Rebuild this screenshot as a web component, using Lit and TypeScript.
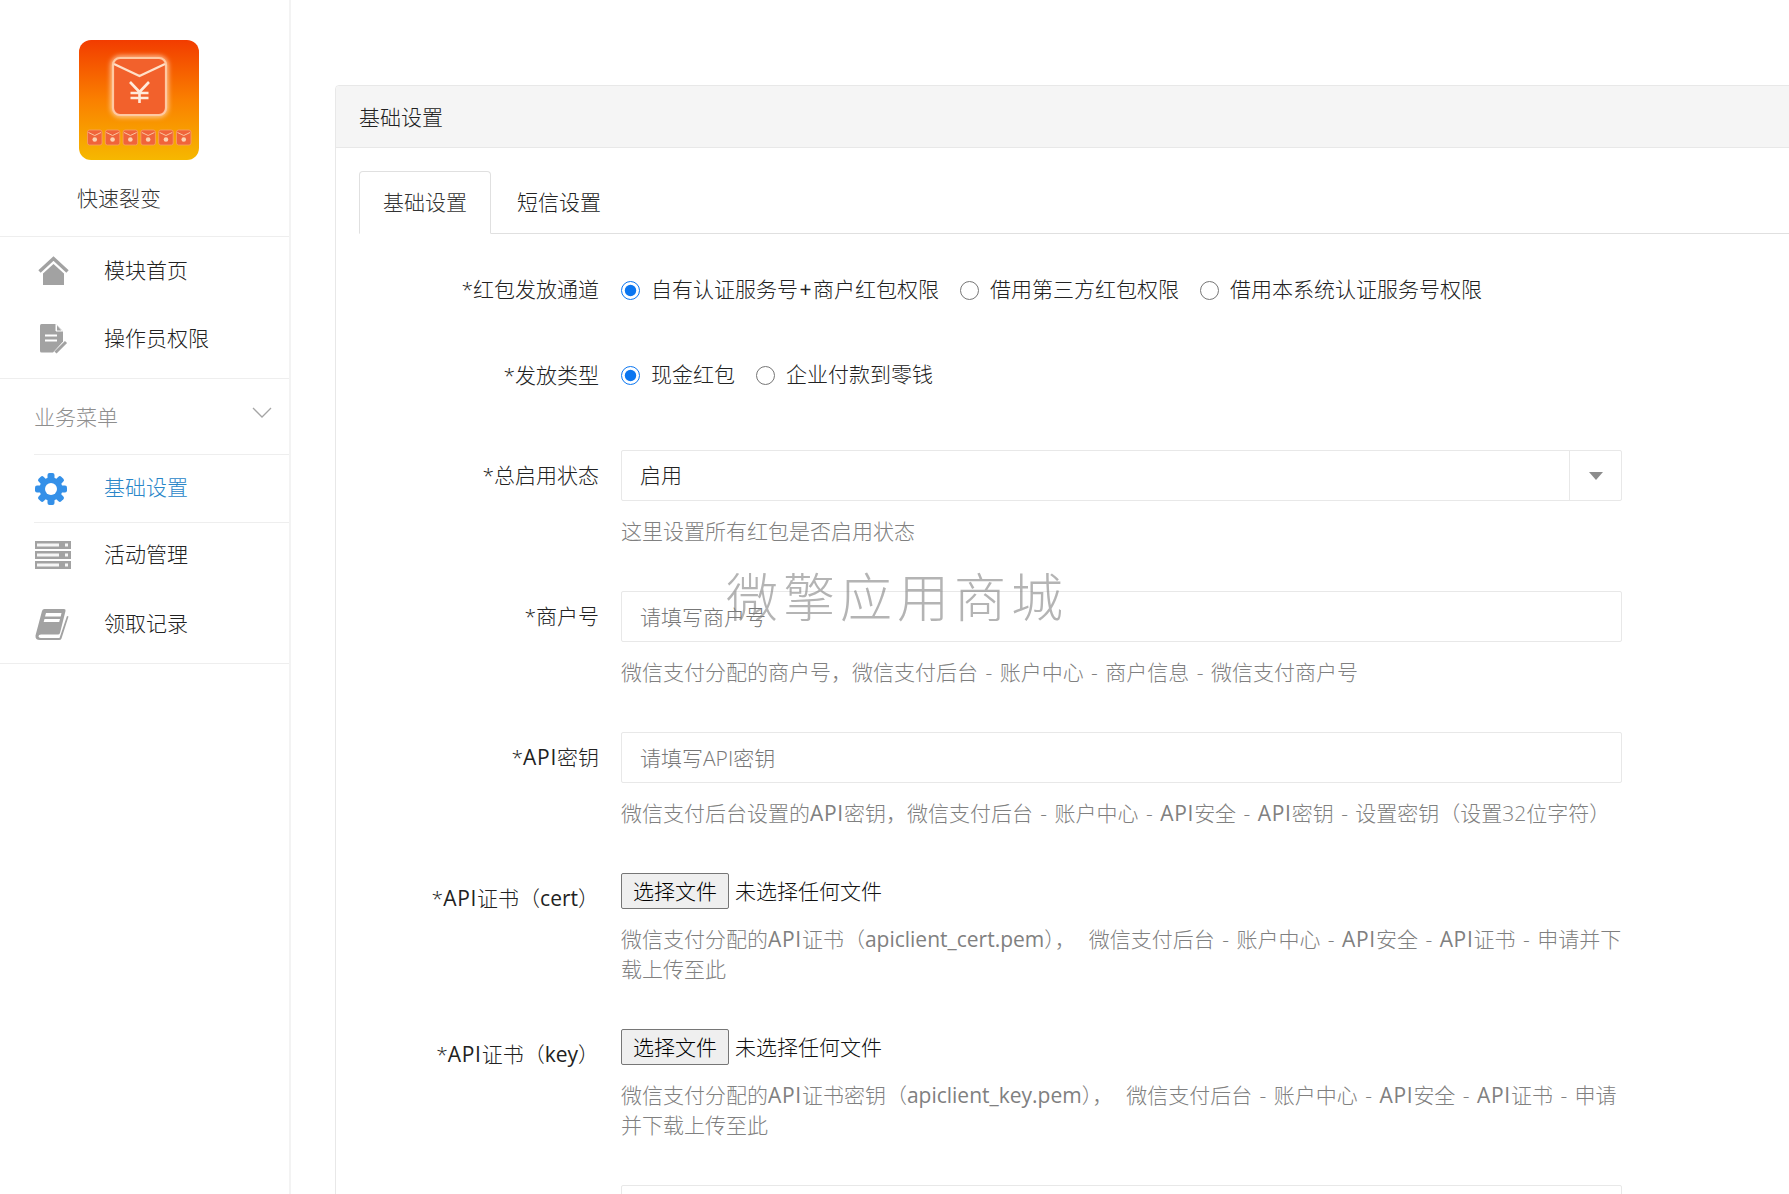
import { LitElement, html, css, svg } from "lit";
import { customElement } from "lit/decorators.js";

const homeIcon = svg`<svg width="31" height="30" viewBox="0 0 31 30"><path d="M1.5 15.5 15.5 2.5 29.5 15.5" fill="none" stroke="#a2a2a2" stroke-width="3.4"/><path d="M5 17.5 15.5 8 26 17.5V29H5Z" fill="#a2a2a2"/></svg>`;
const docIcon = svg`<svg width="28" height="31" viewBox="0 0 28 31"><path d="M1.5 0H16L23 7V17.5L13 28.5H1.5Q0 28.500 0 27V1.500Q0 0 1.500 0Z" fill="#a2a2a2"/><path d="M16 0V7H23" fill="#fff" stroke="#fff" stroke-width="1"/><path d="M17 1.500 21.500 6.500H17Z" fill="#a2a2a2"/><path d="M5 11.500H17M5 16.500H17" stroke="#fff" stroke-width="2.200"/><path d="M15.500 28.500 26 18" stroke="#a2a2a2" stroke-width="3"/></svg>`;
const gearIcon = svg`<svg width="32" height="32" viewBox="0 0 32 32"><g fill="#3490e8">${[0, 45, 90, 135, 180, 225, 270, 315].map(
  (a) => svg`<rect x="12.500" y="0" width="7" height="8" rx="2" transform="rotate(${a} 16 16)"/>`
)}<circle cx="16" cy="16" r="11.500"/></g><circle cx="16" cy="16" r="6" fill="#fff"/></svg>`;
const serverIcon = svg`<svg width="36" height="28" viewBox="0 0 36 28">${[0, 10, 20].map(
  (y) => svg`<rect x="0" y="${y}" width="36" height="8" fill="#a2a2a2"/><rect x="2" y="${y + 2.5}" width="22" height="3" fill="#f6f6f6"/><rect x="30" y="${y + 2.5}" width="3" height="3" fill="#f6f6f6"/>`
)}</svg>`;
const bookIcon = svg`<svg width="34" height="31" viewBox="0 0 34 31"><path d="M9.500 0H29Q31 0 30.500 2L25 24Q24.500 25.500 23 25.500H6Q3.500 25.500 3.500 27.300T6 29H24.500L32 7 33.500 7.500 26.500 29.500Q26 31 24 31H5Q0 31 0.500 26.500L7 2Q7.500 0 9.500 0Z" fill="#a2a2a2"/><path d="M11 4H26.500L25.700 7.500H10ZM9.500 10H25L24.200 13H8.700Z" fill="#fff"/></svg>`;

const envelope = (x: number) => svg`<g transform="translate(${x} 0)"><rect x="0" y="0" width="14.500" height="15" rx="2" fill="#f0643a" stroke="#f7a067" stroke-width=".8"/><path d="M1 2.500 7.250 5.500 13.500 2.500" fill="none" stroke="#fbc6a0" stroke-width="1"/><circle cx="7.250" cy="9.500" r="2.300" fill="#fbd2b0"/></g>`;

const logo = svg`<svg width="120" height="120" viewBox="0 0 120 120">
  <defs>
    <linearGradient id="lg" x1="0" y1="0" x2="0" y2="1">
      <stop offset="0" stop-color="#f23c00"/><stop offset=".5" stop-color="#fa8000"/><stop offset="1" stop-color="#f6b800"/>
    </linearGradient>
    <filter id="gl" x="-30%" y="-30%" width="160%" height="160%"><feGaussianBlur stdDeviation="2.500"/></filter>
  </defs>
  <rect width="120" height="120" rx="12" fill="url(#lg)"/>
  <rect x="34" y="18" width="53" height="57" rx="7" fill="none" stroke="#ffd9b8" stroke-width="4" filter="url(#gl)"/>
  <rect x="34" y="18" width="53" height="57" rx="7" fill="#f2612c" stroke="#ffc9a2" stroke-width="2.200"/>
  <path d="M35 24 60.500 36 86 24" fill="none" stroke="#ffe0c8" stroke-width="2.400"/>
  <path d="M51 42 60.500 52 70 42M51.500 53H69.500M51.500 58H69.500M60.500 52V63" fill="none" stroke="#ffeadb" stroke-width="2.600"/>
  <g transform="translate(8.500 90)">${[0, 17.8, 35.6, 53.4, 71.2, 89].map(envelope)}</g>
</svg>`;

const caret = svg`<svg width="14" height="8" viewBox="0 0 14 8"><path d="M0 0H14L7 8Z" fill="#8c8c8c"/></svg>`;

/* Latin runs sit at regular weight beside the light CJK; capitals and "+" run wider; "~" marks an extra gap. */
const fit = (text: string) =>
  text.split(/(API|apiclient_\w+\.pem|cert|key|\+|~)/).map((part) => {
    if (part === "API") return html`<span class="caps">API</span>`;
    if (part === "+") return html`<span class="plus">+</span>`;
    if (part === "~") return html`<span class="gap"></span>`;
    if (/^(apiclient_|cert$|key$)/.test(part)) return html`<span class="lat">${part}</span>`;
    return part;
  });

@customElement("app-root")
export class AppRoot extends LitElement {
  static styles = css`
    :host {
      display: flex;
      width: 1789px;
      height: 1194px;
      overflow: hidden;
      position: relative;
      background: #fff;
      color: #333;
      font: 300 21px/30px "Open Sans", "Noto Sans CJK SC", sans-serif;
    }
    .caps { letter-spacing: 0.7px; font-weight: 400; }
    .lat { font-weight: 400; }
    .plus { margin: 0 1.5px; font-weight: 400; }
    .gap { display: inline-block; width: 5.500px; }
    aside {
      width: 291px;
      flex: none;
      box-sizing: border-box;
      border-right: 2px solid #f3f3f3;
    }
    .brand {
      height: 237px;
      box-sizing: border-box;
      border-bottom: 1px solid #eee;
      padding: 40px 0 0 79px;
    }
    .brand svg { display: block; }
    .brand div { margin: 23px 0 0 -2px; color: #333; }
    .group { border-bottom: 1px solid #eee; padding-bottom: 4px; }
    .item {
      height: 69px;
      display: flex;
      align-items: center;
      color: #222;
    }
    .item .icon { width: 70px; margin-left: 34px; flex: none; }
    .item .icon svg { display: block; }
    .i-home { padding-left: 4px; width: 66px !important; margin-top: 3px; }
    .i-doc { padding-left: 6px; width: 64px !important; margin-top: 3px; }
    .i-side { margin-left: 35px !important; width: 69px !important; }
    .h1 { height: 65px; }
    .h2 { height: 72px; }
    .sec {
      height: 74px;
      margin-top: 1px;
      margin-left: 34px;
      display: flex;
      align-items: center;
      justify-content: space-between;
      color: #8e8e8e;
      border-bottom: 1px solid #eee;
    }
    .sec svg { margin: -10px 17px 0 0; }
    .sep { border-bottom: 1px solid #eee; margin-left: 34px; }
    .active { color: #2a86c8; height: 67px; }
    .active .t { margin-bottom: 3px; }
    .tight { height: 64px; }
    .tight .t { margin-bottom: 3px; }
    .last { height: 74px; }
    .last .t { margin-bottom: 2px; }
    .g3 { padding-bottom: 2px; }

    main { flex: 1; min-width: 0; padding: 85px 0 0 44px; }
    .panel {
      width: 1500px;
      border: 1px solid #e8e8e8;
      border-radius: 4px 0 0 0;
      box-sizing: border-box;
      height: 1300px;
    }
    .head {
      height: 62px;
      background: #f5f5f5;
      border-bottom: 1px solid #e8e8e8;
      padding-left: 23px;
      line-height: 62px;
      color: #222;
      box-sizing: border-box;
      border-radius: 4px 0 0 0;
    }
    .body { padding: 23px 0 0 23px; }
    .tabs { display: flex; height: 63px; box-sizing: border-box; border-bottom: 1px solid #e0e0e0; }
    .tab {
      padding: 0 23px;
      height: 63px;
      box-sizing: border-box;
      line-height: 60px;
      border: 1px solid transparent;
      color: #222;
    }
    .tab.on {
      margin-right: 2px;
      color: #333;
      background: #fff;
      border-color: #e0e0e0 #e0e0e0 #fff;
      border-radius: 4px 4px 0 0;
    }
    .row {
      display: grid;
      grid-template-columns: 240px 1001px;
      column-gap: 22px;
      margin-top: 44px;
    }
    .row label { text-align: right; line-height: 51px; white-space: nowrap; color: #222; }
    .r-radio { height: 30px; }
    .r-radio label { line-height: 28px; }
    .first { margin-top: 41px; }
    .second { margin-top: 55px; }
    .second label { line-height: 30px; }
    .third { margin-top: 60px; }
    .opts { display: flex; align-items: center; height: 30px; white-space: nowrap; }
    .opts input {
      width: 19px;
      height: 19px;
      margin: 0 11px 0 0;
      flex: none;
      accent-color: #0b76f0;
    }
    .opts span.o { margin-right: 21px; color: #222; padding-bottom: 2px; }
    .field {
      height: 51px;
      box-sizing: border-box;
      border: 1px solid #e8e8e8;
      border-radius: 2px;
      display: flex;
      align-items: stretch;
    }
    .field span { flex: 1; padding-left: 18px; line-height: 49px; color: #222; }
    .field .cb {
      flex: none;
      width: 51px;
      border-left: 1px solid #e8e8e8;
      display: flex;
      align-items: center;
      justify-content: center;
    }
    input.text {
      display: block;
      width: 100%;
      height: 51px;
      box-sizing: border-box;
      border: 1px solid #e8e8e8;
      border-radius: 2px;
      padding: 0 18px;
      font: inherit;
      color: #222;
      outline: none;
    }
    input.text::placeholder { color: #777; opacity: 1; }
    .help { margin: 15px 0 1px; color: #808080; line-height: 30px; word-spacing: 2px; }
    .file { display: flex; align-items: center; height: 36px; color: #111; }
    .file button {
      width: 108px;
      height: 36px;
      padding: 0;
      margin-right: 6px;
      box-sizing: border-box;
      border: 1px solid #767676;
      border-radius: 2px;
      background: #efefef;
      color: #000;
      font: inherit;
    }
    .wm {
      position: absolute;
      left: 726px;
      top: 560px;
      font-size: 52px;
      line-height: 74px;
      letter-spacing: 5px;
      color: rgba(130, 130, 130, 0.6);
      white-space: nowrap;
      pointer-events: none;
    }
  `;

  render() {
    return html`
      <aside>
        <div class="brand">${logo}<div>快速裂变</div></div>
        <div class="group">
          <div class="item h1"><div class="icon i-home">${homeIcon}</div><span>模块首页</span></div>
          <div class="item h2"><div class="icon i-doc">${docIcon}</div><span>操作员权限</span></div>
        </div>
        <div class="sec">业务菜单
          <svg width="20" height="11" viewBox="0 0 20 11"><path d="M1 1 10 10 19 1" fill="none" stroke="#a5a5a5" stroke-width="1.300"/></svg>
        </div>
        <div class="item active"><div class="icon i-side">${gearIcon}</div><span class="t">基础设置</span></div>
        <div class="sep"></div>
        <div class="item tight"><div class="icon i-side">${serverIcon}</div><span class="t">活动管理</span></div>
        <div class="group g3">
          <div class="item last"><div class="icon i-side">${bookIcon}</div><span class="t">领取记录</span></div>
        </div>
      </aside>
      <main>
        <section class="panel">
          <div class="head">基础设置</div>
          <div class="body">
            <div class="tabs">
              <div class="tab on">基础设置</div>
              <div class="tab">短信设置</div>
            </div>

            <div class="row r-radio first">
              <label>*红包发放通道</label>
              <div class="opts">
                <input type="radio" name="ch" checked /><span class="o">${fit("自有认证服务号+商户红包权限")}</span>
                <input type="radio" name="ch" /><span class="o">借用第三方红包权限</span>
                <input type="radio" name="ch" /><span class="o">借用本系统认证服务号权限</span>
              </div>
            </div>

            <div class="row r-radio second">
              <label>*发放类型</label>
              <div class="opts">
                <input type="radio" name="ty" checked /><span class="o">现金红包</span>
                <input type="radio" name="ty" /><span class="o">企业付款到零钱</span>
              </div>
            </div>

            <div class="row third">
              <label>*总启用状态</label>
              <div>
                <div class="field"><span>启用</span><div class="cb">${caret}</div></div>
                <div class="help">这里设置所有红包是否启用状态</div>
              </div>
            </div>

            <div class="row">
              <label>*商户号</label>
              <div>
                <input class="text" placeholder="请填写商户号" />
                <div class="help">微信支付分配的商户号，微信支付后台 - 账户中心 - 商户信息 - 微信支付商户号</div>
              </div>
            </div>

            <div class="row">
              <label>${fit("*API密钥")}</label>
              <div>
                <input class="text" placeholder="请填写API密钥" />
                <div class="help">${fit("微信支付后台设置的API密钥，微信支付后台 - 账户中心 - API安全 - API密钥 - 设置密钥（设置32位字符）")}</div>
              </div>
            </div>

            <div class="row">
              <label>${fit("*API证书（cert）")}</label>
              <div>
                <div class="file"><button>选择文件</button>未选择任何文件</div>
                <div class="help">${fit("微信支付分配的API证书（apiclient_cert.pem）， ~微信支付后台 - 账户中心 - API安全 - API证书 - 申请并下载上传至此")}</div>
              </div>
            </div>

            <div class="row">
              <label>${fit("*API证书（key）")}</label>
              <div>
                <div class="file"><button>选择文件</button>未选择任何文件</div>
                <div class="help">${fit("微信支付分配的API证书密钥（apiclient_key.pem）， ~微信支付后台 - 账户中心 - API安全 - API证书 - 申请并下载上传至此")}</div>
              </div>
            </div>

            <div class="row">
              <label></label>
              <div><input class="text" /></div>
            </div>
          </div>
        </section>
      </main>
      <div class="wm">微擎应用商城</div>
    `;
  }
}
